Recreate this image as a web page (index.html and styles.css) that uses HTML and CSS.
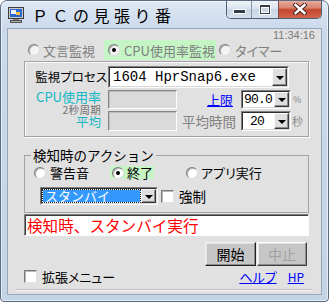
FILE: index.html
```html
<!DOCTYPE html>
<html lang="ja">
<head>
<meta charset="utf-8">
<title>ＰＣの見張り番</title>
<link rel="stylesheet" href="styles.css">
</head>
<body>
<div class="window">
  <div class="titlebar">
    <svg class="app-icon" width="16" height="16" viewBox="0 0 16 16">
      <rect x="0.5" y="0.5" width="15" height="11" fill="#c9c9c9" stroke="#3c3c3c"/>
      <rect x="2" y="2" width="12" height="8" fill="#2c66d0"/>
      <rect x="3" y="3" width="5" height="4" fill="#eef2f8"/>
      <rect x="8" y="5" width="4" height="3" fill="#f0c040"/>
      <rect x="5" y="12" width="6" height="2" fill="#7a7a7a"/>
      <rect x="2.5" y="13.5" width="11" height="2" fill="#b0b0b0" stroke="#505050"/>
    </svg>
    <span class="title">ＰＣの見張り番</span>
    <div class="caption">
      <span class="cbtn min">
        <svg width="13" height="5" viewBox="0 0 13 5"><rect x="0" y="0" width="13" height="5" fill="#fff"/><rect x="1" y="1" width="11" height="3" fill="#333b46"/></svg>
      </span>
      <span class="cbtn max">
        <svg width="12" height="11" viewBox="0 0 12 11"><rect x="0" y="0" width="12" height="11" fill="#fff"/><rect x="1" y="1" width="10" height="9" fill="#333b46"/><rect x="2" y="3" width="8" height="6" fill="#fff"/><rect x="3" y="4" width="6" height="4" fill="#c9d5e2"/></svg>
      </span>
      <span class="cbtn close">
        <svg width="14" height="12" viewBox="0 0 14 12"><path d="M2.5 2 L11.5 10 M11.5 2 L2.5 10" stroke="#4a2620" stroke-width="4.4" stroke-linecap="square" fill="none"/><path d="M2.5 2 L11.5 10 M11.5 2 L2.5 10" stroke="#fff" stroke-width="2.4" stroke-linecap="square" fill="none"/></svg>
      </span>
    </div>
  </div>

  <div class="client">
    <div class="clock">11:34:16</div>

    <div class="modes">
      <label class="radio dis m1"><span class="rb"></span><span>文言監視</span></label>
      <label class="radio dis on m2"><span class="rb"></span><span>CPU使用率監視</span></label>
      <label class="radio dis m3"><span class="rb"></span><span class="p">タイマー</span></label>
    </div>

    <div class="group g1">
      <div class="row r1">
        <span class="lbl1 p">監視プロセス</span>
        <div class="combo cw">
          <div class="combo-in">
            <span class="val mono">1604 HprSnap6.exe</span>
            <span class="drop"><i class="tri"></i></span>
          </div>
        </div>
      </div>
      <div class="row r2">
        <div class="lbl2 two">
          <span class="cyan cpu">CPU使用率</span>
          <span class="sub">2秒周期</span>
        </div>
        <div class="dbox"></div>
        <span class="mid mid2"><a class="link jo">上限</a></span>
        <div class="combo cs">
          <div class="combo-in">
            <span class="val mono v90">90.0</span>
            <span class="drop"><i class="tri"></i></span>
          </div>
        </div>
        <span class="unit pct">%</span>
      </div>
      <div class="row r3">
        <div class="lbl2"><span class="cyan avg">平均</span></div>
        <div class="dbox"></div>
        <span class="mid mid3 gray">平均時間</span>
        <div class="combo cs">
          <div class="combo-in">
            <span class="val mono v20">20</span>
            <span class="drop"><i class="tri"></i></span>
          </div>
        </div>
        <span class="unit sec">秒</span>
      </div>
    </div>

    <fieldset class="g2">
      <legend>検知時のアクション</legend>
      <div class="actions">
        <label class="radio a1"><span class="rb"></span><span>警告音</span></label>
        <label class="radio on a2"><span class="rb"></span><span>終了</span></label>
        <label class="radio a3"><span class="rb"></span><span class="p">アプリ実行</span></label>
      </div>
      <div class="sel-row">
        <div class="combo csel">
          <div class="combo-in">
            <span class="val selval">スタンバイ</span>
            <span class="drop"><i class="tri"></i></span>
          </div>
        </div>
        <label class="check ck1"><span class="cb"></span><span>強制</span></label>
      </div>
    </fieldset>

    <div class="msg">検知時、スタンバイ実行</div>

    <div class="buttons">
      <button class="btn start">開始</button>
      <button class="btn stop" disabled>中止</button>
    </div>

    <div class="footer">
      <label class="check"><span class="cb"></span><span class="p">拡張メニュー</span></label>
      <span class="links">
        <a class="link p">ヘルプ</a>
        <a class="link hp">HP</a>
      </span>
    </div>

    <div class="sep"></div>
  </div>
</div>
</body>
</html>
```

FILE: styles.css
```css
* { box-sizing: border-box; }
html, body { margin: 0; padding: 0; background: #ffffff; }
body {
  font-family: "Noto Sans CJK JP", "Noto Sans", sans-serif;
  font-size: 13px;
  color: #000;
}
.p { font-feature-settings: "palt" 1; }
.mono { font-family: "Liberation Mono", "DejaVu Sans Mono", monospace; }

/* window frame */
.window {
  width: 329px;
  height: 302px;
  border: 1px solid #5b6c82;
  border-radius: 7px 7px 4px 4px;
  background: linear-gradient(#dfe9f5 0, #cad9eb 28px, #c4d4e7 100%);
  box-shadow: inset 0 0 0 1px rgba(255,255,255,0.55);
  padding: 0 6px 6px 6px;
  display: flex;
  flex-direction: column;
  overflow: hidden;
}
.titlebar {
  height: 27px;
  display: flex;
  align-items: center;
  flex: none;
}
.app-icon { margin-left: 1px; flex: none; }
.title {
  margin-left: 8px;
  font-size: 16px;
  line-height: 16px;
  letter-spacing: 4.5px;
  margin-top: 1px;
  white-space: nowrap;
}
.caption {
  margin-left: auto;
  align-self: flex-start;
  margin-top: -1px;
  height: 19px;
  display: flex;
  border: 1px solid #4f6076;
  border-top: none;
  border-radius: 0 0 5px 5px;
  overflow: hidden;
}
.cbtn {
  display: flex;
  align-items: center;
  justify-content: center;
  height: 100%;
}
.min {
  width: 25px;
  background: linear-gradient(#f1f5fa, #dce5ef 45%, #c9d6e4 55%, #d6e1ec);
  border-right: 1px solid #8394a9;
  padding-top: 5px;
}
.max {
  width: 27px;
  background: linear-gradient(#f1f5fa, #dce5ef 45%, #c9d6e4 55%, #d6e1ec);
  border-right: 1px solid #7a4a44;
}
.close {
  width: 42px;
  background: linear-gradient(#eab1a4, #d98572 42%, #c4452f 55%, #d1654d);
}

/* client area */
.client {
  width: 315px;
  height: 267px;
  border: 1px solid #97a7ba;
  background: #e1e1e1;
  padding: 0 12px 0 16px;
  display: flex;
  flex-direction: column;
  flex: none;
}
.clock {
  height: 11px;
  font: 11px/11px "Liberation Sans", sans-serif;
  color: #7a7a7a;
  text-align: right;
  margin-right: -6px;
  margin-top: 1px;
  margin-bottom: -1px;
}

/* radios / checks */
.radio {
  display: flex;
  align-items: center;
  gap: 3px;
  white-space: nowrap;
}
.rb {
  width: 12px;
  height: 12px;
  border-radius: 50%;
  background: #fff;
  border: 1px solid;
  border-color: #7d7d7d #dcdcdc #dcdcdc #7d7d7d;
  box-shadow: inset 1px 1px 0 #b0b0b0;
  display: flex;
  align-items: center;
  justify-content: center;
  flex: none;
}
.radio.on .rb::after {
  content: "";
  width: 4px;
  height: 4px;
  border-radius: 50%;
  background: #000;
}
.radio.dis { color: #808080; }
.radio.dis .rb { background: #f4f4f4; }

.modes {
  height: 20px;
  display: flex;
  align-items: center;
}
.m1 { margin-left: 4px; }
.m2 {
  margin-left: 9px;
  height: 20px;
  background: #c5f5c5;
  padding: 0 3px 0 4px;
  gap: 4px;
  width: 112px;
}
.m3 { margin-left: 3px; gap: 4px; }

/* group boxes */
.group {
  border: 1px solid #a3a3a3;
  box-shadow: inset 1px 1px 0 #fafafa, 1px 1px 0 #fafafa;
}
.g1 {
  margin-top: 1px;
  height: 76px;
  padding-top: 4px;
}
.row { display: flex; align-items: center; }
.r1 { height: 22px; }
.r2 { height: 19px; margin-top: 2px; }
.r3 { height: 20px; margin-top: 2px; }
.lbl1 {
  width: 83px;
  padding-right: 1px;
  text-align: right;
  font-size: 12.5px;
  line-height: 22px;
  white-space: nowrap;
}
.lbl2 {
  width: 76px;
  margin-right: 7px;
  text-align: right;
  align-self: stretch;
  display: flex;
  flex-direction: column;
  align-items: flex-end;
  justify-content: center;
}
.two { justify-content: flex-start; }
.cyan { color: #12b6c6; }
.cpu { font-size: 13px; line-height: 13px; white-space: nowrap; }
.sub { font-size: 10.5px; line-height: 9px; color: #707070; margin-top: 2px; white-space: nowrap; letter-spacing: 0.3px; }
.avg { font-size: 12.5px; line-height: 12px; margin-top: 2px; }
.dbox {
  width: 69px;
  height: 100%;
  border: 1px solid;
  border-color: #858585 #fdfdfd #fdfdfd #858585;
  box-shadow: inset 1px 1px 0 #bdbdbd;
  background: #dadada;
}
.mid {
  width: 64px;
  text-align: right;
  white-space: nowrap;
}
.mid2 { padding-right: 8px; }
.mid3 { padding-right: 5px; font-size: 13.5px; }
.gray { color: #808080; }
.link { color: #0000ff; text-decoration: underline; cursor: pointer; }
.jo { font-size: 13px; }
.unit { color: #8a8a8a; margin-left: 2px; }
.pct { font-size: 9px; }
.sec { font-size: 11px; margin-left: 1px; }

/* combo boxes */
.combo {
  height: 100%;
  border: 1px solid;
  border-color: #7f7f7f #fcfcfc #fcfcfc #7f7f7f;
  flex: none;
}
.combo-in {
  height: 100%;
  display: flex;
  border: 1px solid;
  border-color: #2e2e2e #d8d8d8 #d8d8d8 #2e2e2e;
  background: #fff;
}
.val {
  flex: 1;
  display: flex;
  align-items: center;
  white-space: nowrap;
  overflow: hidden;
}
.cw { width: 181px; }
.cw .val { padding-left: 3px; font-size: 14px; }
.cs { width: 50px; }
.v90 { padding-left: 1px; font-size: 13px; letter-spacing: -0.8px; }
.v20 { padding-left: 7px; font-size: 13px; letter-spacing: -0.8px; }
.drop {
  width: 15px;
  flex: none;
  background: #dedede;
  border: 1px solid;
  border-color: #fafafa #3a3a3a #3a3a3a #fafafa;
  box-shadow: inset -1px -1px 0 #8a8a8a;
  display: flex;
  align-items: center;
  justify-content: center;
}
.tri {
  width: 0;
  height: 0;
  border-left: 4px solid transparent;
  border-right: 4px solid transparent;
  border-top: 4px solid #000;
  margin-top: 1px;
}

/* action group */
.g2 {
  margin: 11px 0 0 0;
  padding: 0 0 7px 0;
  border: 1px solid #a3a3a3;
  min-width: 0;
}
.g2 legend {
  margin-left: 6px;
  padding: 0 2px;
  font-size: 13.5px;
  line-height: 14px;
}
.actions {
  margin-top: 4px;
  height: 13px;
  display: flex;
  align-items: center;
}
.a1 { margin-left: 9px; gap: 4px; }
.a2 {
  margin-left: 21px;
  width: 44px;
  height: 13px;
  background: #c5f5c5;
  padding-left: 2px;
}
.a3 { margin-left: 32px; }
.sel-row {
  margin-top: 8px;
  height: 18px;
  display: flex;
  align-items: center;
}
.csel { width: 118px; margin-left: 15px; }
.selval {
  margin: 1px;
  outline: 1px dotted #222;
  background: #3399ff;
  color: #fff;
  padding-left: 2px;
  font-size: 13px;
  line-height: 12px;
  overflow: visible;
}
.check {
  display: flex;
  align-items: center;
  gap: 5px;
  white-space: nowrap;
}
.ck1 { margin-left: 3px; font-size: 13.5px; }
.cb {
  width: 13px;
  height: 13px;
  background: #fff;
  border: 1px solid;
  border-color: #7a7a7a #e4e4e4 #e4e4e4 #7a7a7a;
  box-shadow: inset 1px 1px 0 #b8b8b8;
  flex: none;
}

/* message box */
.msg {
  margin-top: 1px;
  height: 22px;
  border: 1px solid;
  border-color: #7f7f7f #fcfcfc #fcfcfc #7f7f7f;
  box-shadow: inset 1px 1px 0 #3a3a3a;
  background: #fff;
  color: #ff0000;
  font-size: 15.6px;
  line-height: 20px;
  padding-left: 2px;
  white-space: nowrap;
  overflow: hidden;
}

/* buttons */
.buttons {
  margin-top: 6px;
  margin-right: 2px;
  display: flex;
  justify-content: flex-end;
  gap: 1px;
}
.btn {
  height: 24px;
  padding: 0;
  font-family: "Noto Sans CJK JP", sans-serif;
  font-size: 14px;
  line-height: 20px;
  background: #c6c6c6;
  border: 1px solid;
  border-color: #fdfdfd #404040 #404040 #fdfdfd;
  box-shadow: inset -1px -1px 0 #8c8c8c, inset 1px 1px 0 #e2e2e2;
  color: #000;
}
.start { width: 51px; border-color: #f0f0f0 #202020 #202020 #f0f0f0; }
.stop { width: 50px; color: #a2a2a2; }

/* footer */
.footer {
  margin-top: 3px;
  height: 14px;
  display: flex;
  align-items: center;
}
.links {
  margin-left: auto;
  margin-right: 5px;
  display: flex;
  align-items: center;
  gap: 11px;
}
.hp { font-size: 12px; }
.sep {
  margin-top: 6px;
  margin-left: -8px;
  margin-right: -3px;
  height: 2px;
  border-top: 1px solid #bebebe;
  border-bottom: 1px solid #f7f7f7;
}
```
